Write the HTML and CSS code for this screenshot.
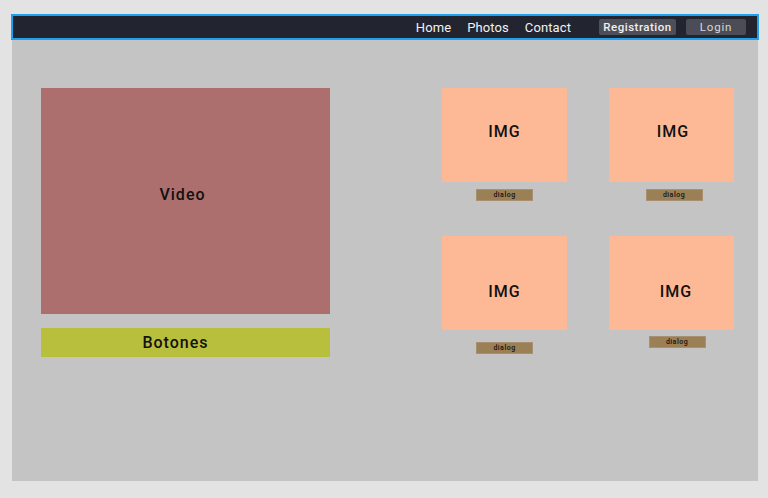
FILE: index.html
```html
<!DOCTYPE html>
<html>
<head>
<meta charset="utf-8">
<link rel="stylesheet" href="styles.css">
</head>
<body>
<div class="frame">
  <nav class="navbar">
    <a class="nav-link">Home</a>
    <a class="nav-link">Photos</a>
    <a class="nav-link">Contact</a>
    <span class="btn btn-reg">Registration</span>
    <span class="btn btn-login">Login</span>
  </nav>
  <main class="content">
    <section class="left">
      <div class="video">Video</div>
      <div class="botones">Botones</div>
    </section>
    <section class="gallery">
      <div class="card">
        <div class="img">IMG</div>
        <div class="dialog">dialog</div>
      </div>
      <div class="card card-b">
        <div class="img">IMG</div>
        <div class="dialog">dialog</div>
      </div>
      <div class="card card-c">
        <div class="img">IMG</div>
        <div class="dialog">dialog</div>
      </div>
      <div class="card card-d">
        <div class="img">IMG</div>
        <div class="dialog">dialog</div>
      </div>
    </section>
  </main>
</div>
</body>
</html>
```
FILE: styles.css
```css
html, body {
  margin: 0;
  padding: 0;
  background: #e3e3e3;
  font-family: Roboto, "Liberation Sans", sans-serif;
}
.frame {
  margin: 14px 10px 0 12px;
  width: 746px;
  height: 467px;
  background: #c4c4c4;
  display: flex;
  flex-direction: column;
}
.navbar {
  margin: 0 -1px;
  height: 22px;
  border: 2px solid #1ea0f0;
  background: #22252f;
  display: flex;
  align-items: center;
  justify-content: flex-end;
  padding-right: 11px;
}
.nav-link {
  color: #f2f2f2;
  font-size: 13px;
  margin-left: 16px;
  letter-spacing: 0.1px;
}
.nav-link:first-child { margin-left: 0; }
.btn {
  height: 16px;
  border-radius: 2px;
  font-size: 11.5px;
  display: flex;
  align-items: center;
  justify-content: center;
  box-sizing: border-box;
}
.btn-reg {
  margin-left: 28px;
  width: 77px;
  background: #4d4f58;
  color: #f0f0f0;
  font-weight: 500;
  letter-spacing: 0.5px;
  padding-bottom: 1px;
}
.btn-login {
  margin-left: 10px;
  width: 60px;
  background: #4b4c56;
  color: #d8d8d8;
  letter-spacing: 0.8px;
}
.content {
  display: flex;
  padding: 48px 0 0 29px;
}
.left {
  width: 289px;
  display: flex;
  flex-direction: column;
}
.video {
  height: 226px;
  box-sizing: border-box;
  background: #ad6f6e;
  display: flex;
  align-items: center;
  justify-content: center;
  font-size: 16px;
  font-weight: 500;
  letter-spacing: 1px;
  color: #111;
  padding: 0 6px 14px 0;
}
.botones {
  margin-top: 14px;
  height: 29px;
  background: #b8bf3d;
  display: flex;
  align-items: center;
  justify-content: center;
  font-size: 16px;
  font-weight: 500;
  letter-spacing: 1px;
  color: #111;
  padding-right: 20px;
}
.gallery {
  margin-left: 112px;
  display: grid;
  grid-template-columns: 125px 125px;
  column-gap: 42px;
  row-gap: 0;
  grid-template-rows: 148px auto;
  align-items: start;
}
.card {
  display: flex;
  flex-direction: column;
  align-items: center;
}
.img {
  width: 125px;
  height: 94px;
  background: #fdb995;
  display: flex;
  align-items: center;
  justify-content: center;
  font-size: 16px;
  font-weight: 500;
  letter-spacing: 1px;
  color: #111;
  padding-bottom: 8px;
  box-sizing: border-box;
}
.dialog {
  margin-top: 7px;
  width: 57px;
  height: 12px;
  box-sizing: border-box;
  background: #9b8056;
  border: 1px solid #a89070;
  font-size: 7px;
  font-weight: 500;
  letter-spacing: 0.5px;
  color: #111;
  display: flex;
  align-items: center;
  justify-content: center;
  line-height: 1;
}
.card-b .img { padding-left: 3px; }
.card-b .dialog { margin-left: 5px; }
.card-c .img { padding-top: 16px; padding-bottom: 0; }
.card-c .dialog { margin-top: 12px; }
.card-d .img { padding-top: 16px; padding-bottom: 0; padding-left: 9px; }
.card-d .dialog { margin-top: 6px; margin-left: 11px; }
```
